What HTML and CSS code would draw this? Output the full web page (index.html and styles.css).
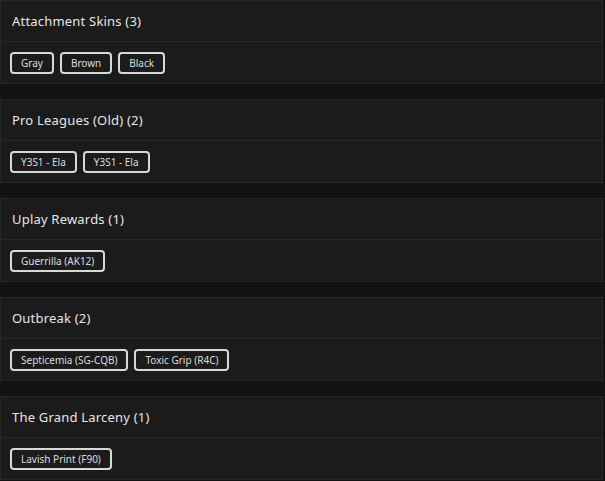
FILE: index.html
```html
<!DOCTYPE html>
<html lang="en">

<head>
    <meta charset="UTF-8">
    <meta name="viewport" content="width=device-width, initial-scale=1.0">
    <title>Skins</title>
    <link rel="stylesheet" href="styles.css">
</head>

<body>
    <div class="list">
        <section class="card">
            <h3 class="card-title">Attachment Skins (3)</h3>
            <div class="card-body">
                <button class="tag">Gray</button>
                <button class="tag">Brown</button>
                <button class="tag">Black</button>
            </div>
        </section>
        <section class="card">
            <h3 class="card-title">Pro Leagues (Old) (2)</h3>
            <div class="card-body">
                <button class="tag">Y3S1 - Ela</button>
                <button class="tag">Y3S1 - Ela</button>
            </div>
        </section>
        <section class="card">
            <h3 class="card-title">Uplay Rewards (1)</h3>
            <div class="card-body">
                <button class="tag">Guerrilla (AK12)</button>
            </div>
        </section>
        <section class="card">
            <h3 class="card-title">Outbreak (2)</h3>
            <div class="card-body">
                <button class="tag">Septicemia (SG-CQB)</button>
                <button class="tag">Toxic Grip (R4C)</button>
            </div>
        </section>
        <section class="card">
            <h3 class="card-title">The Grand Larceny (1)</h3>
            <div class="card-body">
                <button class="tag">Lavish Print (F90)</button>
            </div>
        </section>
    </div>
</body>

</html>
```

FILE: styles.css
```css
body {
    margin: 0;
    padding: 0 2px 0 0;
    background-color: #121212;
    font-family: "Noto Sans", Arial, sans-serif;
    color: #e4e4e4;
}

.list {
    display: flex;
    flex-direction: column;
    gap: 15px;
}

.card {
    background-color: #1b1b1b;
    border: 1px solid #262626;
}

.card-title {
    margin: 0;
    height: 40px;
    padding: 0 11px;
    display: flex;
    align-items: center;
    font-size: 13px;
    font-weight: 400;
    letter-spacing: 0.2px;
    color: #e6e6e6;
    border-bottom: 1px solid #282828;
}

.card-body {
    display: flex;
    gap: 6px;
    padding: 10px 9px 9px;
}

.tag {
    height: 22px;
    padding: 0 9px;
    font-family: inherit;
    font-size: 10px;
    color: #dcdcdc;
    background-color: #1b1b1b;
    border: 2px solid #d8d8d8;
    border-radius: 4px;
    cursor: pointer;
}
```
